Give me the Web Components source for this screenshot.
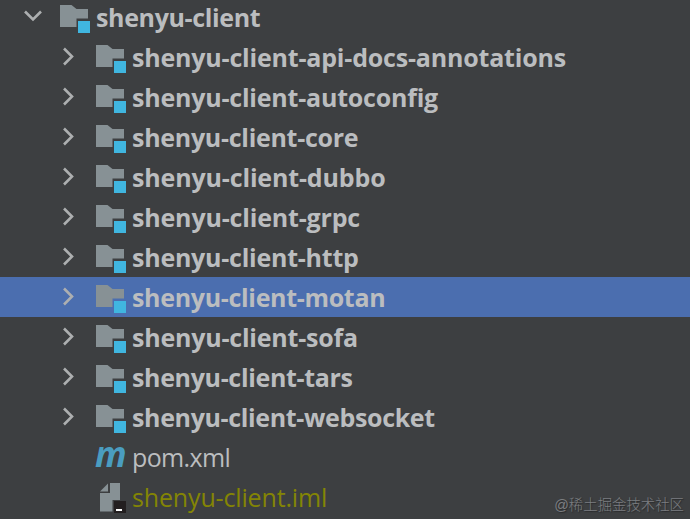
<!DOCTYPE html>
<html lang="en">
<head>
<meta charset="utf-8">
<title>Project tree</title>
<style>
  body {
    margin: 0;
    background: #3d3f41;
    overflow: hidden;
  }
</style>
</head>
<body>
<project-tree>
  <tree-row kind="module" level="0" tracking="-0.35" open>shenyu-client</tree-row>
  <tree-row kind="module" level="1" tracking="-0.19">shenyu-client-api-docs-annotations</tree-row>
  <tree-row kind="module" level="1" tracking="-0.21">shenyu-client-autoconfig</tree-row>
  <tree-row kind="module" level="1" tracking="-0.29">shenyu-client-core</tree-row>
  <tree-row kind="module" level="1" tracking="-0.15">shenyu-client-dubbo</tree-row>
  <tree-row kind="module" level="1" tracking="-0.17">shenyu-client-grpc</tree-row>
  <tree-row kind="module" level="1" tracking="-0.24">shenyu-client-http</tree-row>
  <tree-row kind="module" level="1" tracking="-0.32" selected>shenyu-client-motan</tree-row>
  <tree-row kind="module" level="1" tracking="-0.21">shenyu-client-sofa</tree-row>
  <tree-row kind="module" level="1" tracking="-0.34">shenyu-client-tars</tree-row>
  <tree-row kind="module" level="1" tracking="-0.35">shenyu-client-websocket</tree-row>
  <tree-row kind="maven" level="1" tracking="-0.65">pom.xml</tree-row>
  <tree-row kind="iml" level="1" tracking="-0.15">shenyu-client.iml</tree-row>
  <water-mark slot="overlay">@稀土掘金技术社区</water-mark>
</project-tree>

<script>
// Icons, all drawn on a 32x40 box that fills the row height
const ICONS = {
  module: `
    <path fill="#879195" d="M0 8h11.500l5 4H28v9.500H16.500V30H0z"/>
    <path fill="#40b6e0" d="M18 24h12v12H18z"/>`,
  maven: `
    <text x="-1" y="30" textLength="31" lengthAdjust="spacingAndGlyphs"
      font-family="Open Sans, sans-serif" font-size="36" font-weight="700" font-style="italic" fill="#4a9dc0">m</text>`,
  iml: `
    <path fill="#879195" d="M12 6.500v8H4zM14 6h10v17h-7.500v11.500H4V16h10z"/>
    <path fill="#231f20" d="M18 24h12v12H18z"/>
    <path fill="#fff" d="M20 32h6v2h-6z"/>`,
};

// Expand / collapse arrow
class TreeArrow extends HTMLElement {
  constructor() {
    super();
    this.attachShadow({ mode: "open" });
  }

  connectedCallback() {
    const path = this.hasAttribute("open") ? "M2 14.500l8 8 8-8" : "M5 11.500l8 8-8 8";
    this.shadowRoot.innerHTML = `
      <style>
        :host { display: block; width: 20px; height: 40px; }
        svg { display: block; }
      </style>
      <svg width="20" height="40" fill="none" stroke="#adafb0" stroke-width="2.600">
        <path d="${path}"/>
      </svg>
    `;
  }
}

// Icon of a node, chosen with the "kind" attribute
class TreeIcon extends HTMLElement {
  constructor() {
    super();
    this.attachShadow({ mode: "open" });
  }

  connectedCallback() {
    this.shadowRoot.innerHTML = `
      <style>
        :host { display: block; width: 32px; height: 40px; }
        svg { display: block; overflow: visible; }
      </style>
      <svg width="32" height="40">${ICONS[this.getAttribute("kind")]}</svg>
    `;
  }
}

// One line of the tree
class TreeRow extends HTMLElement {
  constructor() {
    super();
    this.attachShadow({ mode: "open" });
  }

  connectedCallback() {
    const kind = this.getAttribute("kind");
    const level = Number(this.getAttribute("level"));
    const tracking = Number(this.getAttribute("tracking"));
    const open = this.hasAttribute("open") ? "open" : "";
    const arrow = kind === "module" ? `<tree-arrow ${open}></tree-arrow>` : "";

    this.shadowRoot.innerHTML = `
      <style>
        :host {
          display: flex;
          height: 40px;
          padding-left: ${23 + level * 36}px;
          color: #bbbdbf;
          font: 670 25px/40px "Open Sans", "Noto Sans", sans-serif;
          letter-spacing: ${tracking}px;
          white-space: nowrap;
        }
        :host([selected]) { background: #4b6eaf; }
        :host([kind="maven"]) { font-weight: 400; }
        :host([kind="iml"]) { font-weight: 400; color: #848504; }
        .arrow { width: 37px; }
        .label { padding-left: 4px; }
      </style>
      <div class="arrow">${arrow}</div>
      <tree-icon kind="${kind}"></tree-icon>
      <div class="label"><slot></slot></div>
    `;
  }
}

// Faint mark in the corner
class WaterMark extends HTMLElement {
  constructor() {
    super();
    this.attachShadow({ mode: "open" });
    this.shadowRoot.innerHTML = `
      <style>
        :host {
          position: absolute;
          right: 6px;
          bottom: 3px;
          color: #7c7e81;
          font: 300 14.400px/22px "Liberation Sans", "Noto Sans CJK SC", sans-serif;
          text-shadow: 1px 1px 1px #292a2c;
          white-space: nowrap;
        }
      </style>
      <slot></slot>
    `;
  }
}

// Scrolled tree view, the first row is slightly cut at the top
class ProjectTree extends HTMLElement {
  constructor() {
    super();
    this.attachShadow({ mode: "open" });
    this.shadowRoot.innerHTML = `
      <style>
        :host {
          display: block;
          position: relative;
          height: 519px;
          overflow: hidden;
        }
        .rows { margin-top: -3px; }
      </style>
      <div class="rows"><slot></slot></div>
      <slot name="overlay"></slot>
    `;
  }
}

customElements.define("tree-arrow", TreeArrow);
customElements.define("tree-icon", TreeIcon);
customElements.define("tree-row", TreeRow);
customElements.define("water-mark", WaterMark);
customElements.define("project-tree", ProjectTree);
</script>
</body>
</html>
